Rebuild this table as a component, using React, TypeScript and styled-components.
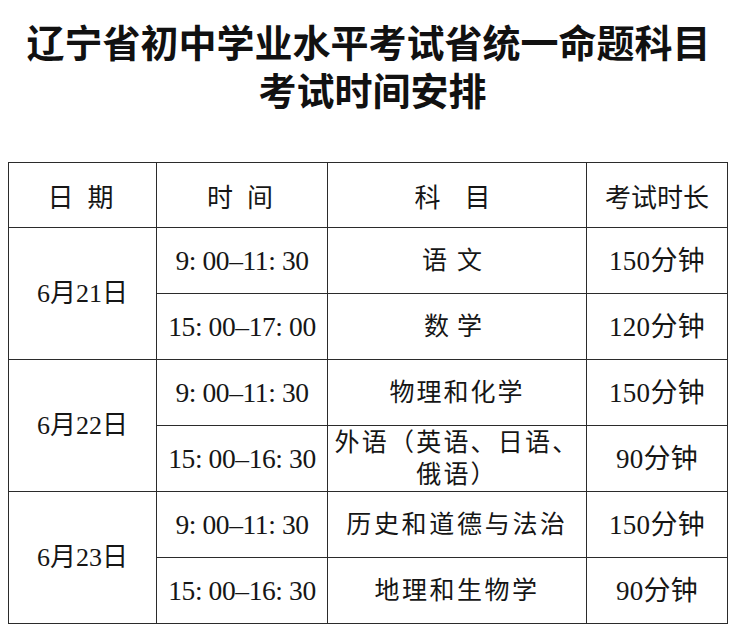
import styled, { createGlobalStyle } from "styled-components";

const GlobalStyle = createGlobalStyle`
  html, body {
    margin: 0;
    padding: 0;
    background: #ffffff;
  }
`;

const serifStack = `"Liberation Serif", "Noto Sans CJK SC", serif`;
const sansStack = `"Noto Sans CJK SC", "Noto Sans", sans-serif`;
const ink = "#161616";
const rule = "1.5px solid #2b2b2b";

const Page = styled.div`
  width: 737px;
  height: 630px;
  overflow: hidden;
  padding: 17px 8px 0 8px;
  box-sizing: border-box;
  color: ${ink};
`;

const Title = styled.h1`
  margin: 0 0 49px 0;
  font-family: ${sansStack};
  font-weight: 700;
  font-size: 38px;
  line-height: 48px;
  text-align: center;
  letter-spacing: 0;
  color: #111;
`;

const TitleLine = styled.div<{ shift?: number }>`
  padding-left: ${({ shift }) => shift ?? 0}px;
`;

const Table = styled.table`
  width: 719px;
  border-collapse: collapse;
  table-layout: fixed;
`;

const HeadCell = styled.th<{ spacing?: number }>`
  height: 64px;
  padding: 0;
  border: ${rule};
  font-family: ${sansStack};
  font-weight: 400;
  font-size: 26px;
  letter-spacing: ${({ spacing }) => spacing ?? 0}px;
  text-align: center;
  vertical-align: middle;
`;

const Cell = styled.td<{ spacing?: number }>`
  height: 65px;
  padding: 0 6px;
  border: ${rule};
  font-family: ${serifStack};
  font-size: 25px;
  line-height: 32px;
  letter-spacing: ${({ spacing }) => spacing ?? 0}px;
  text-align: center;
  vertical-align: middle;
`;

const DateCell = styled(Cell)`
  font-size: 26px;
  letter-spacing: 0;
`;

const TimeCell = styled(Cell)`
  font-size: 27.5px;
  letter-spacing: -0.4px;
  white-space: nowrap;
`;

const DurationCell = styled(Cell)`
  font-size: 27px;
  letter-spacing: 0.3px;
`;

interface Exam {
  time: string;
  subject: string;
  duration: string;
  spacing?: number;
}

interface ExamDay {
  date: string;
  exams: Exam[];
}

const schedule: ExamDay[] = [
  {
    date: "6月21日",
    exams: [
      { time: "9: 00–11: 30", subject: "语文", duration: "150分钟", spacing: 10 },
      { time: "15: 00–17: 00", subject: "数学", duration: "120分钟", spacing: 8 },
    ],
  },
  {
    date: "6月22日",
    exams: [
      { time: "9: 00–11: 30", subject: "物理和化学", duration: "150分钟", spacing: 2 },
      {
        time: "15: 00–16: 30",
        subject: "外语（英语、日语、俄语）",
        duration: "90分钟",
        spacing: 2.2,
      },
    ],
  },
  {
    date: "6月23日",
    exams: [
      { time: "9: 00–11: 30", subject: "历史和道德与法治", duration: "150分钟", spacing: 2.7 },
      { time: "15: 00–16: 30", subject: "地理和生物学", duration: "90分钟", spacing: 2.5 },
    ],
  },
];

export default function App() {
  return (
    <Page>
      <GlobalStyle />
      <Title>
        <TitleLine>辽宁省初中学业水平考试省统一命题科目</TitleLine>
        <TitleLine shift={8}>考试时间安排</TitleLine>
      </Title>
      <Table>
        <colgroup>
          <col style={{ width: 148 }} />
          <col style={{ width: 171 }} />
          <col style={{ width: 259 }} />
          <col style={{ width: 141 }} />
        </colgroup>
        <thead>
          <tr>
            <HeadCell spacing={4}>日 期</HeadCell>
            <HeadCell spacing={4}>时 间</HeadCell>
            <HeadCell spacing={9}>科 目</HeadCell>
            <HeadCell>考试时长</HeadCell>
          </tr>
        </thead>
        <tbody>
          {schedule.map((day) =>
            day.exams.map((exam, i) => (
              <tr key={day.date + exam.time + exam.subject}>
                {i === 0 && (
                  <DateCell rowSpan={day.exams.length}>{day.date}</DateCell>
                )}
                <TimeCell>{exam.time}</TimeCell>
                <Cell spacing={exam.spacing}>{exam.subject}</Cell>
                <DurationCell>{exam.duration}</DurationCell>
              </tr>
            ))
          )}
        </tbody>
      </Table>
    </Page>
  );
}
